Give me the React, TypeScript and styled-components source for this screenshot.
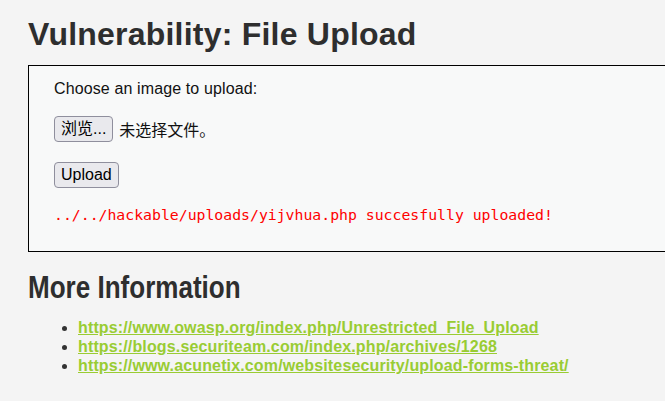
import React from 'react';
import styled, { createGlobalStyle } from 'styled-components';

const GlobalStyle = createGlobalStyle`
  html, body {
    margin: 0;
    padding: 0;
    overflow: hidden;
    background: #f4f4f4;
  }
  body {
    font-family: 'Liberation Sans', Arial, 'Noto Sans CJK SC', sans-serif;
    color: #000;
  }
`;

const links = [
  'https://www.owasp.org/index.php/Unrestricted_File_Upload',
  'https://blogs.securiteam.com/index.php/archives/1268',
  'https://www.acunetix.com/websitesecurity/upload-forms-threat/',
];

const Page = styled.div`
  padding: 16px 0 0 28px;
`;

const Title = styled.h1`
  margin: 0 0 13px;
  font-size: 32px;
  font-weight: bold;
  line-height: 36px;
  letter-spacing: 0.22px;
  color: #2e2e2e;
`;

const UploadArea = styled.div`
  width: 700px;
  border: 1px solid #000;
  background: #f8f9f9;
  padding: 14px 25px 28px;
  display: flex;
  flex-direction: column;
  align-items: flex-start;
`;

const Prompt = styled.p`
  margin: 0 0 18px;
  font-size: 16px;
  line-height: 18px;
  letter-spacing: 0.12px;
  color: #111;
`;

const FileRow = styled.div`
  display: flex;
  align-items: center;
  gap: 6px;
  margin-bottom: 20px;
`;

const Button = styled.button`
  box-sizing: border-box;
  height: 26px;
  padding: 0 6px;
  border: 1px solid #8f8f9d;
  border-radius: 4px;
  background: #e9e9ed;
  font-family: 'Liberation Sans', Arial, 'Noto Sans CJK SC', sans-serif;
  font-size: 16px;
  line-height: 24px;
  color: #000;
`;

const NoFile = styled.span`
  font-size: 16px;
  line-height: 20px;
  font-family: 'Noto Sans CJK SC', sans-serif;
  color: #111;
`;

const Message = styled.pre`
  margin: 18px 0 0;
  font-family: 'DejaVu Sans Mono', monospace;
  font-size: 14.8px;
  line-height: 17px;
  color: #ff0000;
`;

const SectionTitle = styled.h2`
  margin: 19px 0 0;
  font-size: 31px;
  font-weight: bold;
  line-height: 34px;
  color: #2e2e2e;
  transform: scaleX(0.84);
  transform-origin: left center;
`;

const LinkList = styled.ul`
  margin: 13px 0 0;
  padding-left: 50px;
  color: #333;
  font-size: 16px;
  line-height: 19px;
`;

const LinkItem = styled.li`
  list-style: disc;
`;

const Link = styled.a`
  color: #99cc33;
  font-weight: bold;
  letter-spacing: 0.14px;
  text-decoration: underline;
`;

export default function App() {
  return (
    <>
      <GlobalStyle />
      <Page>
        <Title>Vulnerability: File Upload</Title>
        <UploadArea>
          <Prompt>Choose an image to upload:</Prompt>
          <FileRow>
            <Button type="button">浏览...</Button>
            <NoFile>未选择文件。</NoFile>
          </FileRow>
          <Button type="button">Upload</Button>
          <Message>../../hackable/uploads/yijvhua.php succesfully uploaded!</Message>
        </UploadArea>
        <SectionTitle>More Information</SectionTitle>
        <LinkList>
          {links.map((href) => (
            <LinkItem key={href}>
              <Link href={href}>{href}</Link>
            </LinkItem>
          ))}
        </LinkList>
      </Page>
    </>
  );
}
